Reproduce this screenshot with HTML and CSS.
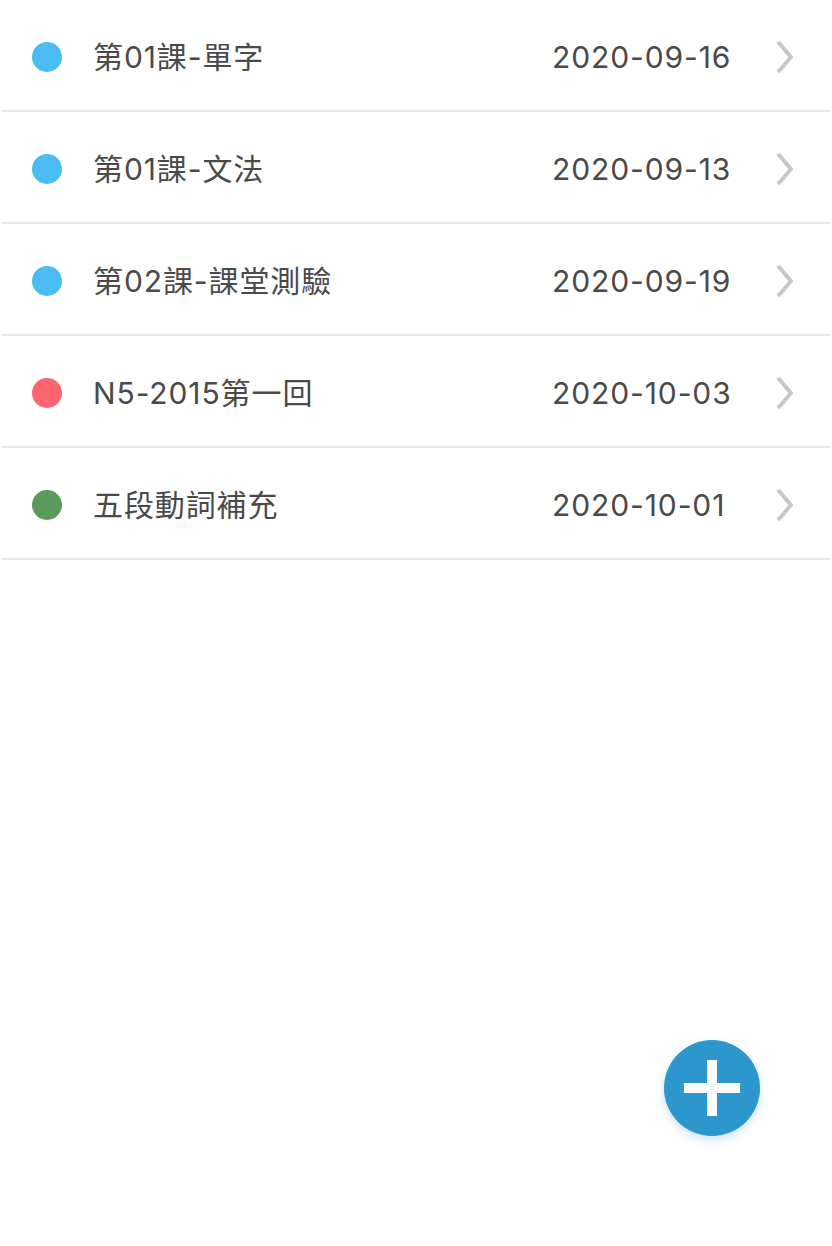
FILE: index.html
```html
<!DOCTYPE html>
<html lang="zh-Hant">
<head>
<meta charset="utf-8">
<link rel="stylesheet" href="styles.css">
</head>
<body>
<ul class="list">
  <li class="row"><span class="dot blue"></span><span class="title">第01課-單字</span><span class="date">2020-09-16</span><svg class="chev" viewBox="0 0 20 36"><path d="M3 3 L16 18 L3 33" fill="none" stroke="#c7c7cc" stroke-width="4"/></svg></li>
  <li class="row"><span class="dot blue"></span><span class="title">第01課-文法</span><span class="date">2020-09-13</span><svg class="chev" viewBox="0 0 20 36"><path d="M3 3 L16 18 L3 33" fill="none" stroke="#c7c7cc" stroke-width="4"/></svg></li>
  <li class="row"><span class="dot blue"></span><span class="title">第02課-課堂測驗</span><span class="date">2020-09-19</span><svg class="chev" viewBox="0 0 20 36"><path d="M3 3 L16 18 L3 33" fill="none" stroke="#c7c7cc" stroke-width="4"/></svg></li>
  <li class="row"><span class="dot red"></span><span class="title">N5-2015第一回</span><span class="date">2020-10-03</span><svg class="chev" viewBox="0 0 20 36"><path d="M3 3 L16 18 L3 33" fill="none" stroke="#c7c7cc" stroke-width="4"/></svg></li>
  <li class="row"><span class="dot green"></span><span class="title">五段動詞補充</span><span class="date">2020-10-01</span><svg class="chev" viewBox="0 0 20 36"><path d="M3 3 L16 18 L3 33" fill="none" stroke="#c7c7cc" stroke-width="4"/></svg></li>
</ul>
<button class="fab" aria-label="add"><span class="plus"></span></button>
</body>
</html>
```
FILE: styles.css
```css
html, body {
  margin: 0;
  padding: 0;
  background: #fff;
  height: 100%;
}
body {
  font-family: Inter, "Noto Sans CJK TC", "Noto Sans", sans-serif;
  color: #4a4a4a;
}
.list {
  list-style: none;
  margin: 0 2px;
  padding: 0;
}
.row {
  height: 106px;
  padding: 4px 35px 0 30px;
  border-bottom: 2px solid #e6e6e6;
  display: flex;
  align-items: center;
}
.dot {
  width: 30px;
  height: 30px;
  border-radius: 50%;
  flex: none;
  margin-right: 31px;
}
.blue { background: #4bbdf3; }
.red { background: #fd6570; }
.green { background: #5a9a5a; }
.title {
  flex: 1;
  font-size: 30px;
  line-height: 40px;
  letter-spacing: 0.9px;
  white-space: nowrap;
}
.date {
  flex: none;
  width: 177px;
  font-size: 30px;
  line-height: 40px;
  letter-spacing: 0.9px;
  text-align: left;
  margin-right: 46px;
  white-space: nowrap;
}
.chev {
  width: 20px;
  height: 36px;
  flex: none;
}
.fab {
  position: fixed;
  left: 664px;
  top: 1040px;
  width: 96px;
  height: 96px;
  border-radius: 50%;
  border: 0;
  padding: 0;
  background: #2b97cc;
  box-shadow: 0 4px 10px rgba(43, 151, 204, 0.25);
}
.plus {
  position: absolute;
  left: 20px;
  top: 43px;
  width: 56px;
  height: 10px;
  background: #fff;
}
.plus::after {
  content: "";
  position: absolute;
  left: 23px;
  top: -23px;
  width: 10px;
  height: 56px;
  background: #fff;
}
```
